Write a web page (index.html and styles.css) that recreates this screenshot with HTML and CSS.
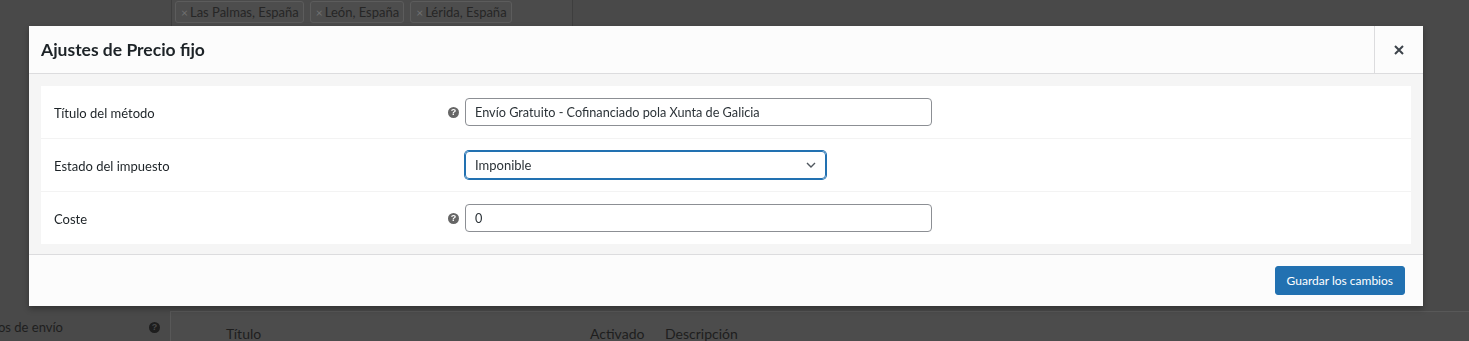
FILE: index.html
```html
<!DOCTYPE html>
<html>
<head>
    <title>Ajustes de Precio fijo</title>
    <link rel="stylesheet" href="styles.css">
</head>
<body>
    <div class="page">
        <div class="regions-row">
            <div class="regions-box">
                <span class="chip"><span class="chip-x">×</span>Las Palmas, España</span>
                <span class="chip"><span class="chip-x">×</span>León, España</span>
                <span class="chip"><span class="chip-x">×</span>Lérida, España</span>
            </div>
        </div>

        <div class="methods-row">
            <div class="methods-label">
                <span>Métodos de envío</span>
                <span class="tip tip-dim">?</span>
            </div>
            <div class="methods-box">
                <span class="col-title">Título</span>
                <span class="col-enabled">Activado</span>
                <span class="col-desc">Descripción</span>
            </div>
        </div>
    </div>

    <div class="modal">
        <div class="modal-header">
            <h1>Ajustes de Precio fijo</h1>
            <button class="modal-close" type="button">
                <svg width="10" height="10" viewBox="0 0 10 10">
                    <path d="M1 1 L9 9 M9 1 L1 9" stroke="#3c434a" stroke-width="2"/>
                </svg>
            </button>
        </div>

        <div class="modal-body">
            <div class="form-table">
                <div class="form-row">
                    <label class="titledesc" for="method_title">Título del método</label>
                    <div class="forminp">
                        <span class="tip">?</span>
                        <input class="input-text" id="method_title" type="text" value="Envío Gratuito - Cofinanciado pola Xunta de Galicia">
                    </div>
                </div>
                <div class="form-row">
                    <label class="titledesc" for="tax_status">Estado del impuesto</label>
                    <div class="forminp">
                        <span class="tip tip-blank"></span>
                        <div class="select-box" id="tax_status">
                            <span>Imponible</span>
                            <svg width="10" height="6" viewBox="0 0 10 6">
                                <path d="M1 1 L5 5 L9 1" fill="none" stroke="#50575e" stroke-width="1.4"/>
                            </svg>
                        </div>
                    </div>
                </div>
                <div class="form-row">
                    <label class="titledesc" for="cost">Coste</label>
                    <div class="forminp">
                        <span class="tip">?</span>
                        <input class="input-text" id="cost" type="text" value="0">
                    </div>
                </div>
            </div>
        </div>

        <div class="modal-footer">
            <button class="button-primary" type="button">Guardar los cambios</button>
        </div>
    </div>
</body>
</html>
```

FILE: styles.css
```css
body {
    font-family: 'Lato', 'Liberation Sans', sans-serif;
    font-size: 13px;
    margin: 0;
    padding: 0;
    background-color: #494949;
    color: #1d2327;
    overflow: hidden;
    height: 341px;
}

/* page behind the dimmed backdrop */
.page {
    height: 341px;
}
.regions-row {
    padding-left: 171px;
}
.regions-box {
    width: 393px;
    height: 26px;
    padding: 1px 4px 0 3px;
    background: #4b4b4b;
    border-left: 1px solid #3e3e3e;
    border-right: 1px solid #3e3e3e;
    display: flex;
    gap: 6px;
    align-items: flex-start;
}
.chip {
    display: inline-flex;
    align-items: center;
    height: 20px;
    padding: 0 4px 0 5px;
    background: #4d4d4d;
    border: 1px solid #5c5c5c;
    border-radius: 3px;
    color: #262626;
    font-size: 13px;
}
.chip-x {
    color: #707070;
    margin-right: 2px;
    font-size: 12px;
}

.methods-row {
    display: flex;
    margin-top: 284px;
}
.methods-label {
    margin-left: -40px;
    padding: 8px 10px 0 0;
    box-sizing: border-box;
    display: flex;
    justify-content: space-between;
    align-items: flex-start;
    color: #1e1e1e;
    flex-shrink: 0;
    width: 210px;
    line-height: 16px;
}
.methods-box {
    flex: 1;
    height: 30px;
    box-sizing: border-box;
    background: #4c4c4c;
    border-left: 1px solid #585858;
    border-top: 1px solid #585858;
    color: #1e1e1e;
    display: flex;
    padding: 15px 0 0 55px;
    font-size: 14px;
    line-height: 14px;
}
.col-title {
    width: 364px;
}
.col-enabled {
    width: 75px;
}

.tip {
    display: inline-flex;
    width: 11px;
    height: 11px;
    border-radius: 50%;
    background: #666;
    color: #fff;
    font-size: 9px;
    font-weight: bold;
    align-items: center;
    justify-content: center;
    line-height: 1;
    font-family: 'Liberation Sans', sans-serif;
    flex-shrink: 0;
}
.tip-dim {
    background: #1e1e1e;
    color: #494949;
    margin-top: 3px;
}
.tip-blank {
    background: transparent;
}

/* modal */
.modal {
    position: fixed;
    top: 26px;
    left: 29px;
    width: 1394px;
    background: #fcfcfc;
    box-shadow: 0 3px 6px rgba(0,0,0,0.3);
}
.modal-header {
    display: flex;
    align-items: stretch;
    height: 47px;
    border-bottom: 1px solid #dcdcde;
}
.modal-header h1 {
    flex: 1;
    margin: 0;
    padding: 0 12px;
    font-size: 17.5px;
    font-weight: 700;
    line-height: 47px;
    color: #1d2327;
}
.modal-close {
    width: 49px;
    border: 0;
    border-left: 1px solid #dcdcde;
    background: transparent;
    padding: 0;
    display: flex;
    align-items: center;
    justify-content: center;
}

.modal-body {
    background: #f5f5f5;
    padding: 12px 12px 10px;
    border-bottom: 1px solid #dcdcde;
}
.form-table {
    background: #fff;
}
.form-row {
    display: flex;
    align-items: center;
    height: 52px;
    border-bottom: 1px solid #f3f3f3;
}
.form-row:last-child {
    border-bottom: 0;
}
.titledesc {
    width: 407px;
    box-sizing: border-box;
    padding: 1px 0 0 13px;
    color: #1d2327;
    font-size: 13px;
}
.forminp {
    display: flex;
    align-items: center;
    gap: 6px;
}
.input-text {
    width: 467px;
    height: 28px;
    box-sizing: border-box;
    border: 1px solid #8c8f94;
    border-radius: 4px;
    padding: 0 9px;
    font-family: inherit;
    font-size: 12.7px;
    color: #2c3338;
    background: #fff;
}
.select-box {
    width: 361px;
    height: 28px;
    box-sizing: border-box;
    border: 1px solid #2271b1;
    box-shadow: 0 0 0 1px #2271b1;
    border-radius: 4px;
    padding: 0 9px;
    display: flex;
    align-items: center;
    justify-content: space-between;
    color: #2c3338;
}

.modal-footer {
    display: flex;
    justify-content: flex-end;
    padding: 11px 18px 11px;
    background: #fcfcfc;
}
.button-primary {
    background: #2271b1;
    border: 1px solid #2271b1;
    border-radius: 3px;
    color: #fff;
    font-family: inherit;
    font-size: 12px;
    height: 29px;
    padding: 0 11px;
}
```
